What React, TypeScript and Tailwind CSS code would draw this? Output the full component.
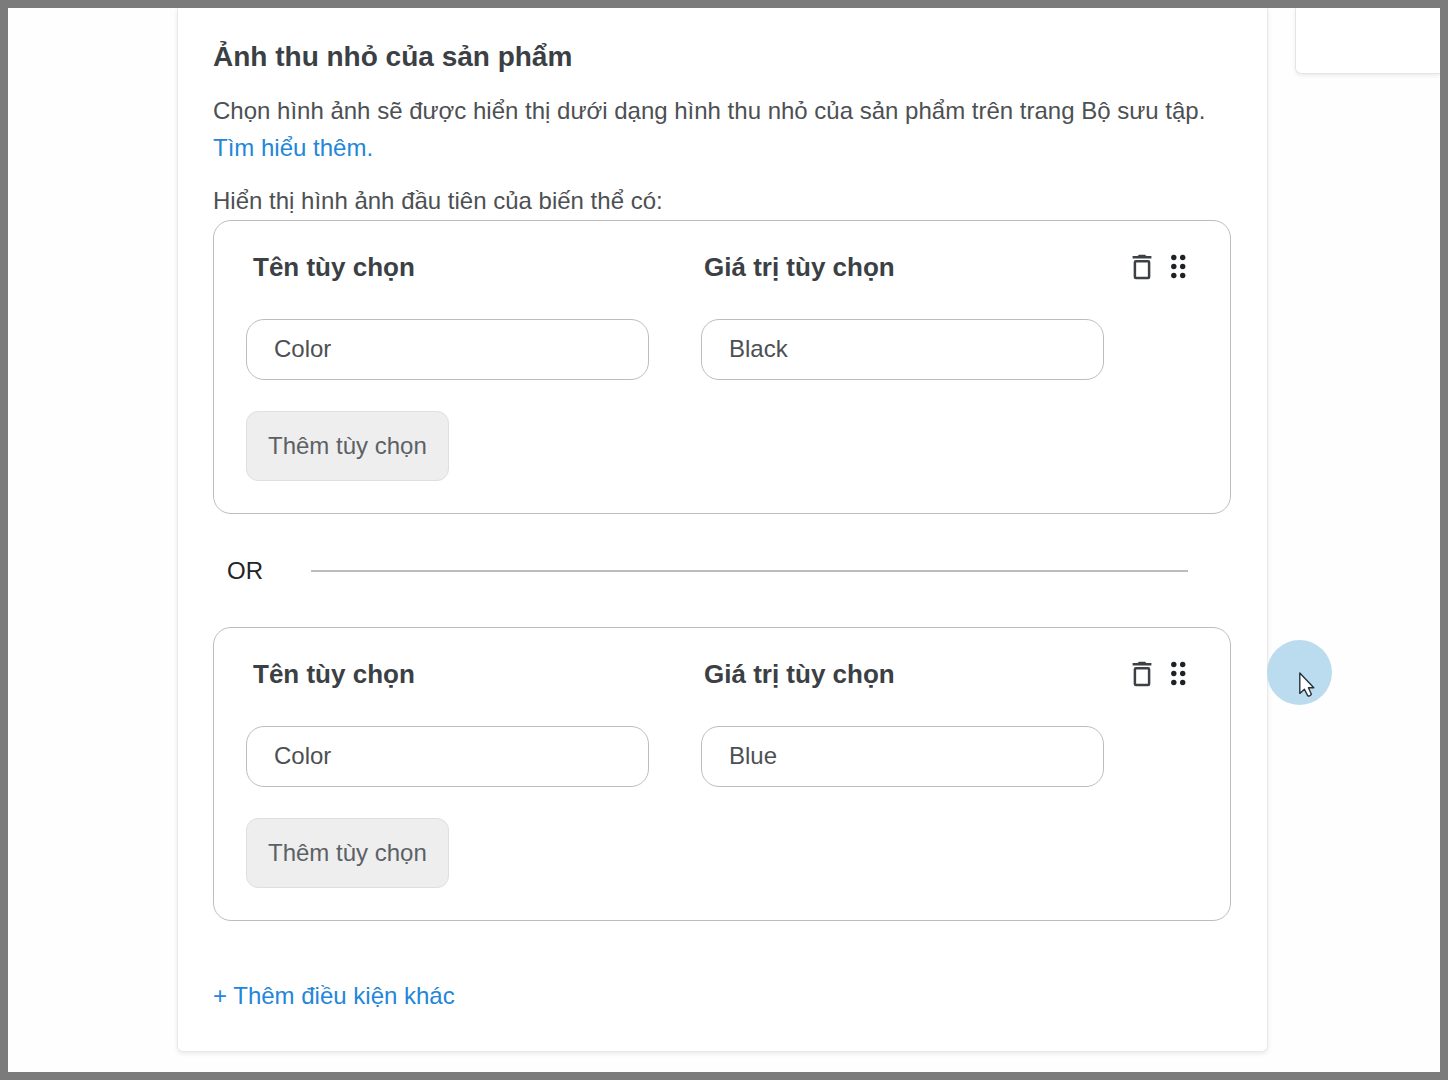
import { useId } from "react";

function TrashIcon() {
  return (
    <svg width="20" height="26" viewBox="0 0 20 26" fill="none" aria-hidden="true">
      <path d="M5.6 2 L7 0.8 H13 L14.4 2 H19.4 V4.6 H0.6 V2 Z" fill="#3d4044" />
      <rect x="2.9" y="7.2" width="14.2" height="16.8" rx="1" stroke="#3d4044" strokeWidth="2.5" />
    </svg>
  );
}

function DragIcon() {
  return (
    <svg width="16" height="26" viewBox="0 0 16 26" fill="#1f2224" aria-hidden="true">
      {[3.5, 12.5, 21.5].map((y) => (
        <g key={y}>
          <circle cx="3.8" cy={y} r="2.7" />
          <circle cx="12.7" cy={y} r="2.7" />
        </g>
      ))}
    </svg>
  );
}

const fieldClass =
  "h-[61px] w-full min-w-0 rounded-[18px] border border-[#bdbdbd] bg-white pl-[27px] pr-6 pb-0.5 text-[24px] text-[#4d5053] outline-none";

function ConditionCard({ name, value }: { name: string; value: string }) {
  const id = useId();
  return (
    <section className="rounded-[18px] border border-[#bdbdbd] pt-7 pb-8 pl-8">
      <div className="grid grid-cols-[451fr_428fr_98px] items-center pl-[7px] text-[26px] leading-9 font-bold text-[#3b4045]">
        <label htmlFor={`${id}-name`}>Tên tùy chọn</label>
        <label htmlFor={`${id}-value`}>Giá trị tùy chọn</label>
        <div className="flex items-center gap-[18px]">
          <button type="button" aria-label="Xóa">
            <TrashIcon />
          </button>
          <button type="button" aria-label="Di chuyển">
            <DragIcon />
          </button>
        </div>
      </div>
      <div className="mt-[34px] grid grid-cols-[1fr_1fr] gap-x-[52px] pr-[126px]">
        <input id={`${id}-name`} type="text" defaultValue={name} className={fieldClass} />
        <input id={`${id}-value`} type="text" defaultValue={value} className={fieldClass} />
      </div>
      <button
        type="button"
        className="mt-[31px] block h-[70px] rounded-xl border border-[#dfdfdf] bg-[#eeeeee] px-[21px] text-[24px] text-[#5c6165]"
      >
        Thêm tùy chọn
      </button>
    </section>
  );
}

export default function App() {
  return (
    <div className="relative flex min-h-screen items-start gap-[27px] overflow-hidden border-8 border-[#7b7b7b] bg-[#fefefe] pb-5 pl-[169px] font-['Liberation_Sans',Arial,sans-serif] text-[24px] text-[#4d5053]">
      <main className="min-w-0 flex-1 rounded-b-md border border-t-0 border-[#e9e9e9] bg-white pt-[31px] pr-9 pb-[37px] pl-[35px] shadow-[0_2px_4px_rgba(0,0,0,0.08)]">
        <h1 className="text-[28px] leading-9 font-bold text-[#3b4045]">Ảnh thu nhỏ của sản phẩm</h1>
        <p className="mt-[17px] leading-[37px]">
          Chọn hình ảnh sẽ được hiển thị dưới dạng hình thu nhỏ của sản phẩm trên trang Bộ sưu tập.{" "}
          <a href="#" className="text-[#2386d9]">
            Tìm hiểu thêm.
          </a>
        </p>
        <p className="mt-4 mb-px leading-[37px]">Hiển thị hình ảnh đầu tiên của biến thể có:</p>

        <ConditionCard name="Color" value="Black" />
        <div className="flex h-[113px] items-center gap-12 pr-[43px] pl-3.5 text-[#222426]">
          <span>OR</span>
          <hr className="flex-1 border-t-2 border-[#bcbcbc]" />
        </div>
        <ConditionCard name="Color" value="Blue" />

        <button type="button" className="mt-[57px] block leading-9 text-[#2386d9]">
          + Thêm điều kiện khác
        </button>
      </main>

      <aside className="h-[66px] w-[145px] shrink-0 rounded-bl-md border-b border-l border-[#e4e4e4] bg-white shadow-[0_2px_4px_rgba(0,0,0,0.07)]" />

      <div className="pointer-events-none absolute top-[632px] right-[108px] size-[65px] rounded-full bg-[#bbdcef]">
        <svg className="absolute top-8 left-8" width="17" height="26" viewBox="0 0 17 26" aria-hidden="true">
          <path
            d="M0.8 1 V21.4 L5.4 17.2 L8.7 23.6 Q10.8 25 12.4 22.2 L9.4 15.8 H14.8 Z"
            fill="white"
            stroke="#26323a"
            strokeWidth="1.4"
            strokeLinejoin="round"
          />
        </svg>
      </div>
    </div>
  );
}
